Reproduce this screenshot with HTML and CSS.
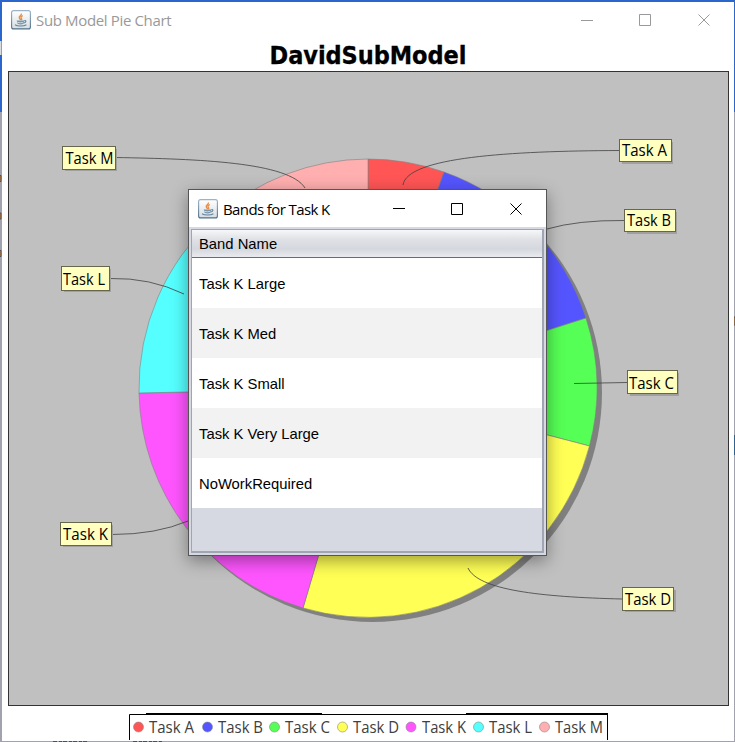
FILE: index.html
```html
<!DOCTYPE html>
<html lang="en">
<head>
<meta charset="utf-8">
<title>Sub Model Pie Chart</title>
<link rel="stylesheet" href="styles.css">
</head>
<body>
<svg class="defs" width="735" height="742" aria-hidden="true">
  <defs>
    <linearGradient id="tile" x1="0" y1="0" x2="0" y2="1"><stop offset="0" stop-color="#fff"/><stop offset="1" stop-color="#d6dde2"/></linearGradient>
    <linearGradient id="edge" x1="0" y1="0" x2="0" y2="1"><stop offset="0" stop-color="#9db4c6"/><stop offset="1" stop-color="#4f6f88"/></linearGradient>
    <symbol id="java" viewBox="0 0 20 20">
      <rect x=".6" y=".6" width="18.8" height="18.3" rx="2" fill="url(#tile)" stroke="url(#edge)" stroke-width="1.1"/>
      <path d="M10.300 3.500c.8 2-3 2.600-2 4.600.3.8 1.300 1.300 1.300 2M11.800 5.700c-2 .8-2.400 1.700-1.300 2.700.6.6.2 1.200-.3 1.700" fill="none" stroke="#ee8a3c" stroke-width="1.300"/>
      <path d="M5.700 10.500h7.600l-.7 3.300q-3 1.300-6 0z" fill="#7895a9"/>
      <path d="M13.300 10.800c2.300-.7 2.100 1.800-.5 2.100M4 14.700c2.400 1.700 8.800 1.700 11.400 0" fill="none" stroke="#5f829b" stroke-width="1.100"/>
      <path d="M6.300 12.300q3 .9 6 0" fill="none" stroke="#dce7ed" stroke-width=".8"/>
    </symbol>
  </defs>
  <!-- slivers of the desktop behind the window -->
  <path fill="#d9dadd" d="M0 41h1.500v14H0z"/>
  <path fill="#c77f35" stroke="#3c4254" stroke-width=".8" d="M-1 175.500h2v6h-2zM-1 213h2v6h-2zM-1 250.500h2v6h-2zM734 317h2v8h-2z"/>
  <path fill="#2f628c" d="M734 435h1v20h-1z"/>
  <path stroke="#4a5058" stroke-dasharray="4 2 3 1" d="M53 741.500h34M133 741.500h29"/>
</svg>
<main class="window">
  <header class="titlebar">
    <svg class="app-icon"><use href="#java"/></svg>
    <span class="caption">Sub Model Pie Chart</span>
    <svg class="controls" width="130" height="20" viewBox="0 0 130 20"><path d="M0 10.500h12M58.500 4.500h11v11h-11zM117.500 4.500l11 11M128.500 4.500l-11 11"/></svg>
  </header>
  <h1 class="chart-title"><span>DavidSubModel</span></h1>
  <svg class="plot" width="721" height="635" viewBox="8 71 721 635">
    <rect class="plot-area" x="8.500" y="71.500" width="720" height="634"/>
    <circle cx="372.500" cy="392.500" r="229.500" fill="#808080"/>
    <g class="slices">
      <path fill="#ff5555" d="M368 388V159A229 229 0 0 1 444 172Z"/>
      <path fill="#5555ff" d="M368 388L444 172A229 229 0 0 1 586 318Z"/>
      <path fill="#55ff55" d="M368 388L586 318A229 229 0 0 1 589.500 446Z"/>
      <path fill="#ffff55" d="M368 388L589.500 446A229 229 0 0 1 303 608Z"/>
      <path fill="#ff55ff" d="M368 388L303 608A229 229 0 0 1 139 393Z"/>
      <path fill="#55ffff" d="M368 388L139 393A229 229 0 0 1 215 218Z"/>
      <path fill="#ffafaf" d="M368 388L215 218A229 229 0 0 1 368 159Z"/>
    </g>
    <g class="leaders">
      <path d="M403 185C407 157 510 151 619 150.500"/>
      <path d="M547 229Q578 220 624 220.500"/>
      <path d="M574 383.500L627 382.500"/>
      <path d="M468 568C478 590 540 597 622 599"/>
      <path d="M188 521Q156 534.500 112 534.500"/>
      <path d="M184 294Q150 277.500 110 278.500"/>
      <path d="M305 188C289 162 198 159 116 157.500"/>
    </g>
    <g class="tags">
      <g><rect class="shade" x="622" y="142" width="51" height="22"/><rect x="619.500" y="139.500" width="52" height="22"/><text x="622" y="156" textLength="45" lengthAdjust="spacingAndGlyphs">Task A</text></g>
      <g><rect class="shade" x="627" y="212" width="50" height="22"/><rect x="624.500" y="209.500" width="51" height="22"/><text x="627" y="226" textLength="44" lengthAdjust="spacingAndGlyphs">Task B</text></g>
      <g><rect class="shade" x="630" y="373" width="49" height="23"/><rect x="627.500" y="370.500" width="50" height="23"/><text x="629" y="388.500" textLength="45" lengthAdjust="spacingAndGlyphs">Task C</text></g>
      <g><rect class="shade" x="625" y="590" width="51" height="22"/><rect x="622.500" y="587.500" width="51" height="23"/><text x="625" y="605" textLength="46" lengthAdjust="spacingAndGlyphs">Task D</text></g>
      <g><rect class="shade" x="63" y="525" width="50" height="22"/><rect x="60.500" y="522.500" width="51" height="23"/><text x="63" y="540" textLength="45" lengthAdjust="spacingAndGlyphs">Task K</text></g>
      <g><rect class="shade" x="64" y="269" width="47" height="23"/><rect x="61.500" y="266.500" width="48" height="24"/><text x="63" y="285" textLength="42" lengthAdjust="spacingAndGlyphs">Task L</text></g>
      <g><rect class="shade" x="65" y="149" width="52" height="22"/><rect x="62.500" y="146.500" width="53" height="23"/><text x="65.500" y="164" textLength="48" lengthAdjust="spacingAndGlyphs">Task M</text></g>
    </g>
  </svg>
  <svg class="legend" width="480" height="27" viewBox="129 713 480 27">
    <path class="frame" d="M129.500 740V714.500H608M607.500 714V740M146 713.500H322M466 713.500H608"/>
    <g class="dots">
      <circle cx="138.500" cy="727" r="5" fill="#ff5555"/><circle cx="207.500" cy="727" r="5" fill="#5555ff"/><circle cx="274.500" cy="727" r="5" fill="#55ff55"/><circle cx="342.500" cy="727" r="5" fill="#ffff55"/><circle cx="411" cy="727" r="5" fill="#ff55ff"/><circle cx="478.500" cy="727" r="5" fill="#55ffff"/><circle cx="544.500" cy="727" r="5" fill="#ffafaf"/>
    </g>
    <g class="names">
      <text x="149" y="733" textLength="45" lengthAdjust="spacingAndGlyphs">Task A</text><text x="218" y="733" textLength="45" lengthAdjust="spacingAndGlyphs">Task B</text><text x="285" y="733" textLength="45" lengthAdjust="spacingAndGlyphs">Task C</text><text x="353" y="733" textLength="46" lengthAdjust="spacingAndGlyphs">Task D</text><text x="422" y="733" textLength="44" lengthAdjust="spacingAndGlyphs">Task K</text><text x="489" y="733" textLength="43" lengthAdjust="spacingAndGlyphs">Task L</text><text x="555" y="733" textLength="48" lengthAdjust="spacingAndGlyphs">Task M</text>
    </g>
  </svg>
</main>
<section class="dialog">
  <header class="titlebar">
    <svg class="app-icon"><use href="#java"/></svg>
    <span class="caption">Bands for Task K</span>
    <svg class="controls" width="130" height="20" viewBox="0 0 130 20"><path d="M0 9.500h12M58.500 4.500h11v11h-11zM117.500 4.500l11 11M128.500 4.500l-11 11"/></svg>
  </header>
  <div class="pane">
    <table class="bands">
      <thead><tr><th>Band Name</th></tr></thead>
      <tbody>
        <tr><td>Task K Large</td></tr>
        <tr><td>Task K Med</td></tr>
        <tr><td>Task K Small</td></tr>
        <tr><td>Task K Very Large</td></tr>
        <tr><td>NoWorkRequired</td></tr>
      </tbody>
    </table>
  </div>
</section>
</body>
</html>
```
FILE: styles.css
```css
* { box-sizing: border-box; }
body {
  margin: 0;
  width: 735px;
  height: 742px;
  padding: 2px 1px 1px 2px;
  overflow: hidden;
  background: linear-gradient(#2a66cc 0 112px, #a0a3ad 112px);
}
svg { display: block; }
.defs { position: absolute; left: 0; top: 0; }

.window {
  position: relative;
  height: 739px;
  display: flex;
  flex-direction: column;
  background: #fff;
}
.titlebar {
  display: flex;
  align-items: center;
  font: 15px "Open Sans", sans-serif;
}
.window > .titlebar { height: 38px; padding: 0 23px 2px 9px; color: #999; }
.app-icon { width: 20px; height: 20px; flex: none; }
.caption { margin-left: 5px; white-space: nowrap; letter-spacing: -.35px; }
.dialog .caption { letter-spacing: -.6px; }
.controls { margin-left: auto; }
.controls path { fill: none; stroke: currentColor; }

.chart-title {
  height: 31px;
  margin: 0;
  text-align: center;
  font: bold 25px/32px "DejaVu Sans Condensed", "DejaVu Sans", sans-serif;
  letter-spacing: -.05px;
  -webkit-text-stroke: .3px #000;
}
.plot { margin-left: 6px; flex: none; }
.plot-area { fill: #c0c0c0; stroke: #333; }
.slices path { stroke: #808080; stroke-width: .6; }
.leaders path { fill: none; stroke: #404040; stroke-width: .8; }
.tags rect { fill: #ffffc0; stroke: #66664d; }
.tags .shade { fill: #a0a0a0; stroke: none; }
text { font: 16px "Open Sans", sans-serif; }

.legend { margin: 7px 0 0 127px; flex: none; }
.frame { fill: none; stroke: #000; }
.dots circle { stroke: #888; stroke-width: .6; }
.names { fill: #404040; }

.dialog {
  position: absolute;
  left: 188px;
  top: 189px;
  width: 359px;
  height: 367px;
  display: flex;
  flex-direction: column;
  border: 1px solid #555;
  background: #d6d9e2;
  box-shadow: 0 5px 16px rgba(0, 0, 0, .38);
}
.dialog .titlebar { height: 37px; padding: 0 23px 0 9px; background: #fff; flex: none; }
.pane {
  flex: 1;
  margin: 2px;
  border: 1px solid #9fa5b3;
  border-width: 1px 2px 2px 1px;
}
.bands {
  width: 100%;
  border-collapse: separate;
  border-spacing: 0;
  font: 14.8px "Liberation Sans", sans-serif;
}
.bands th {
  height: 28px;
  padding: 0 7px;
  text-align: left;
  font-weight: normal;
  border-bottom: 1px solid #666b75;
  background: linear-gradient(#f7f7f8, #dfe1e5 35%, #d4d7dd 70%, #e9ebef);
}
.bands td { height: 50px; padding: 2px 7px 0; background: #fff; }
.bands tr:nth-child(even) td { background: #f2f2f2; }
```
